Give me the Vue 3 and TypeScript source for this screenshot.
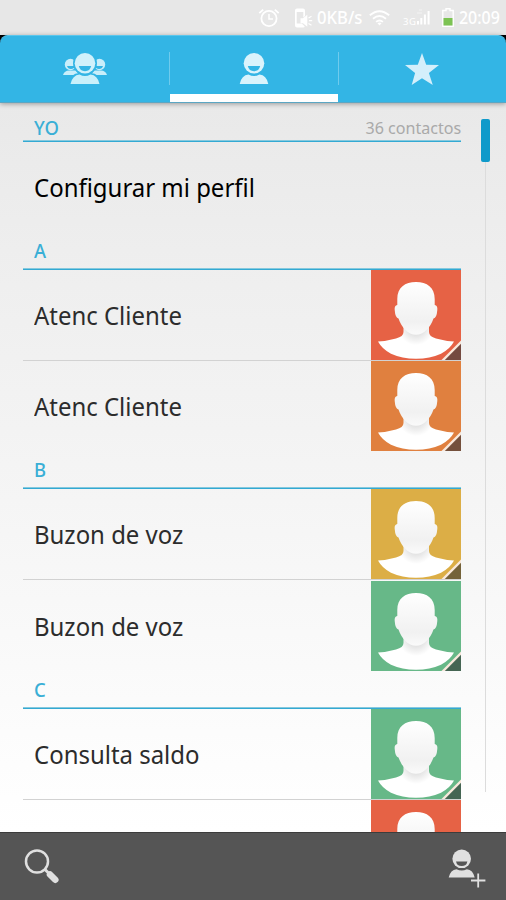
<script setup lang="ts">
interface Contact {
  id: number
  name: string
  color: string
  corner: string
}

interface Section {
  letter: string
  contacts: Contact[]
}

const sections: Section[] = [
  {
    letter: 'A',
    contacts: [
      { id: 1, name: 'Atenc Cliente', color: '#e66245', corner: '#744a40' },
      { id: 2, name: 'Atenc Cliente', color: '#e0803f', corner: '#74503c' },
    ],
  },
  {
    letter: 'B',
    contacts: [
      { id: 3, name: 'Buzon de voz', color: '#dcae46', corner: '#746239' },
      { id: 4, name: 'Buzon de voz', color: '#67b888', corner: '#456553' },
    ],
  },
  {
    letter: 'C',
    contacts: [
      { id: 5, name: 'Consulta saldo', color: '#67b888', corner: '#456553' },
      { id: 6, name: '', color: '#e66245', corner: '#744a40' },
    ],
  },
]
</script>

<template>
  <div class="screen">
    <header class="status">
      <svg class="st-alarm" width="22" height="20" viewBox="0 0 22 20" fill="none" stroke="#fff">
        <circle cx="11" cy="10.5" r="7.6" stroke-width="1.8" />
        <path d="M11 6v5h4" stroke-width="1.5" />
        <path d="M1.3 5.2 5.2 1.6M20.7 5.2 16.8 1.6" stroke-width="1.8" />
      </svg>
      <svg class="st-phone" width="19" height="20" viewBox="0 0 19 20" fill="#fff">
        <path fill-rule="evenodd" d="M3 .5h6q2 0 2 2V8L9.300 9.500V4H2.700v11.500h5l3 2.800q0 1.200-1.700 1.200H3q-2 0-2-2v-15q0-2 2-2Z" />
        <path d="M6.500 10.300h2.500L13.300 6.800v12L9 15.300H6.500Z" />
        <path d="M14.500 10l3-1.800M15 12.700h3.200M14.500 15.400l3 1.800" stroke="#fff" stroke-width="1.200" />
      </svg>
      <span class="st-text st-rate">0KB/s</span>
      <svg class="st-wifi" width="21" height="16" viewBox="0 0 21 16" fill="none" stroke="#fff" stroke-width="1.800">
        <path d="M.8 5.300Q10.500-2.800 20.200 5.300M4 8.700q6.500-5.400 13 0M7.100 11.900q3.400-2.800 6.800 0" />
        <path d="m8.500 13.200 2 2.300 2-2.300q-2-1.400-4 0Z" fill="#fff" stroke="none" />
      </svg>
      <svg class="st-signal" width="28" height="22" viewBox="0 0 28 22" fill="#fff">
        <text x="0" y="17.500" font-size="9.500" textLength="13">3G</text>
        <path d="M14 14h2v3.500h-2zM17.300 11h2v6.500h-2zM20.900 7.500h2v10h-2zM24.600 4h2v13.500h-2z" />
        <path d="M14 6h5M16 3h3" stroke="#fff" stroke-opacity=".5" />
      </svg>
      <svg class="st-battery" width="12" height="19" viewBox="0 0 12 19" fill="none">
        <path d="M4 2.500V.8h4v1.700h3.200v15.700H.8V2.500Z" stroke="#fff" stroke-width="1.400" />
        <path d="M1.500 10h9v7.500h-9z" fill="#7cc353" />
      </svg>
      <span class="st-text st-clock">20:09</span>
    </header>

    <div class="tabs-wrap">
      <nav class="tabs">
        <div class="tab">
          <svg width="44" height="32" viewBox="0 0 44 32">
            <g fill="#c9eefa">
              <circle cx="7.500" cy="11.500" r="5.700" />
              <circle cx="36.500" cy="11.500" r="5.700" />
              <path d="M0 22q1.500-4.500 6-4.500h7l3 4.500ZM44 22q-1.500-4.500-6-4.500h-7L28 22Z" />
            </g>
            <path d="M4 13h8q-.8 3-4 3t-4-3ZM40 13h-8q.8 3 4 3t4-3Z" fill="#33b5e5" />
            <circle cx="22" cy="10.300" r="12" fill="#33b5e5" />
            <path d="M5.500 31q2-11 11-10.900h11q9-.1 11 10.900Z" fill="#33b5e5" />
            <path d="M7.500 31q2-9 9-9.500 5.500 3 11 0 7 .5 9 9.500Z" fill="#c9f0fb" />
            <circle cx="22" cy="10.300" r="10.300" fill="#d0f1fb" />
            <path d="M15.800 13h12.400q-1.200 5.200-6.200 5.200T15.800 13Z" fill="#33b5e5" />
          </svg>
        </div>
        <div class="tab active">
          <svg width="30" height="32" viewBox="0 0 30 32">
            <path d="M.7 31q1.900-9 8.800-9.500 5.500 3 11 0 6.900.5 8.800 9.500Z" fill="#daf3fc" />
            <circle cx="15" cy="10.300" r="10.300" fill="#daf3fc" />
            <path d="M8.800 13h12.400Q20 18.200 15 18.200T8.800 13Z" fill="#33b5e5" />
          </svg>
        </div>
        <div class="tab">
          <svg width="34" height="33" viewBox="0 0 34 33">
            <path d="M17 0 21.200 11.800 34 12.100 23.900 20 27.800 32 17 25.200 6.700 32 10.100 20 0 12.100 12.800 11.800Z" fill="#d4effb" />
          </svg>
        </div>
      </nav>
    </div>

    <main class="content">
      <div class="list">
        <div class="head me-head">
          <span class="letter">YO</span>
          <span class="count">36 contactos</span>
        </div>
        <div class="me"><span class="name">Configurar mi perfil</span></div>
        <section v-for="s in sections" :key="s.letter">
          <div class="head"><span class="letter">{{ s.letter }}</span></div>
          <div v-for="c in s.contacts" :key="c.id" class="row">
            <span class="name">{{ c.name }}</span>
            <svg class="avatar" width="90" height="90" viewBox="0 0 90 90">
              <defs>
                <linearGradient :id="'face' + c.id" x1="0" y1="0" x2="0" y2="1">
                  <stop offset="0" stop-color="#fff" />
                  <stop offset=".25" stop-color="#fafafa" />
                  <stop offset=".75" stop-color="#f1f1f1" />
                  <stop offset="1" stop-color="#fafafa" />
                </linearGradient>
                <radialGradient :id="'neck' + c.id" gradientUnits="userSpaceOnUse" cx="45" cy="57" r="18">
                  <stop offset=".3" stop-color="#dcdcdc" />
                  <stop offset="1" stop-color="#fff" />
                </radialGradient>
              </defs>
              <rect width="90" height="90" :fill="c.color" />
              <path
                :fill="'url(#neck' + c.id + ')'"
                d="M32.500 54V62Q32.500 66.500 25 68.500 16 71 7 71.500 11 79 20 83.700 31 88.700 45 88.700T70 83.700Q79 79 83 71.500 74 71 65 68.500 58 66.500 58 62V54Z"
              />
              <path
                :fill="'url(#face' + c.id + ')'"
                d="M45 12C34 12 26.300 17.500 26.300 29V35Q23.200 35.500 23.700 40 24.300 48 27.500 48.500C30.500 57 37 64.800 45 64.800S59.500 57 62.500 48.500Q65.700 48 66.300 40 66.800 35.500 63.700 35V29C63.700 17.500 56 12 45 12Z"
              />
              <path d="M70.500 90 90 70.500V90Z" fill="#f9e9dc" />
              <path d="M73.800 90 90 73.800V90Z" :fill="c.corner" />
            </svg>
          </div>
        </section>
      </div>
      <div class="scroller"><div class="thumb"></div></div>
    </main>

    <footer class="bar">
      <svg width="36" height="36" viewBox="0 0 36 36">
        <circle cx="13" cy="12.500" r="11" fill="none" stroke="#e0e0e0" stroke-width="2.500" />
        <path d="m20.500 20 4 4" stroke="#e0e0e0" stroke-width="3" />
        <path d="m26 25.500 5.300 5.300" stroke="#e0e0e0" stroke-width="6.500" stroke-linecap="round" />
      </svg>
      <svg width="38" height="40" viewBox="0 0 38 40">
        <path d="M.7 28.500Q2.500 20.700 8.500 20.200q5.200 2.800 10.400 0 6 .5 7.800 8.300Z" fill="#e0e0e0" />
        <circle cx="13.700" cy="9.800" r="9.300" fill="#e0e0e0" />
        <path d="M8 12.500h11.400q-1 4.600-5.700 4.600T8 12.500Z" fill="#555" />
        <path d="M30.200 24.500v14M23 31.500h14.400" stroke="#e0e0e0" stroke-width="1.800" />
      </svg>
    </footer>
  </div>
</template>

<style>
body {
  margin: 0;
}
</style>

<style scoped>
.screen {
  width: 506px;
  height: 900px;
  display: flex;
  flex-direction: column;
  overflow: hidden;
  font-family: 'Noto Sans', 'Open Sans', sans-serif;
  background: linear-gradient(#e6e6e6 0, #e9e9e9 105px, #eeeeee 250px, #f5f5f5 500px, #fff 832px);
}

.status {
  height: 35px;
  box-sizing: border-box;
  padding-left: 258px;
  display: flex;
  align-items: center;
  flex: none;
  background: #e7e7e7;
}

.status svg {
  flex: none;
}

.st-phone {
  margin-left: 14px;
}

.st-text {
  color: #fff;
  font-size: 17.5px;
  font-weight: 500;
  line-height: 35px;
  white-space: nowrap;
  transform-origin: left;
  transform: scaleX(0.95);
}

.st-rate {
  width: 47px;
  margin-left: 4px;
}

.st-wifi {
  margin-left: 5px;
}

.st-signal {
  margin-left: 13px;
}

.st-battery {
  margin-left: 11px;
}

.st-clock {
  margin-left: 5px;
  transform: scaleX(0.91);
}

.tabs-wrap {
  height: 67px;
  flex: none;
  background: #000;
}

.tabs {
  height: 68px;
  box-sizing: border-box;
  display: grid;
  grid-template-columns: 170px 168px 168px;
  position: relative;
  background: #33b5e5;
  border-top: 1px solid #5bc6ec;
  border-bottom: 1px solid #5ba6c3;
  border-radius: 8px 8px 0 0;
  box-shadow: 0 1px 5px rgba(0, 0, 0, 0.35);
}

.tab {
  display: flex;
  justify-content: center;
  align-items: flex-start;
  padding-top: 17px;
  background: linear-gradient(#6fcbed, #6fcbed) no-repeat right 16px / 1px 33px;
}

.tab.active {
  background: none;
  border-bottom: 8px solid #fff;
}

.tab:last-child {
  padding-right: 0;
  background-position: left 16px;
}

.content {
  flex: 1;
  min-height: 0;
  display: flex;
  overflow: hidden;
}

.list {
  width: 438.5px;
  margin-left: 22.5px;
  flex: none;
}

.head {
  height: 37.9px;
  box-sizing: border-box;
  display: flex;
  justify-content: space-between;
  align-items: flex-end;
  padding: 0 0 2px 11.5px;
  background: linear-gradient(#86c9dd 0 1px, #33a9d3 1px 2px) no-repeat 0 100% / 100% 2px;
}

.letter {
  font-size: 20px;
  line-height: 34px;
  font-weight: 500;
  color: #3aafd6;
  transform-origin: left;
  transform: scaleX(0.92);
}

.me-head {
  height: 40px;
}

.me-head .letter {
  line-height: 24px;
}

.count {
  font-size: 17px;
  line-height: 25px;
  color: #a9a9a9;
  transform-origin: right;
  transform: scaleX(0.945);
}

.me {
  height: 89.8px;
  padding-left: 11.5px;
  display: flex;
  align-items: center;
}

.name {
  font-size: 25px;
  color: #2c2c2c;
  white-space: nowrap;
  transform-origin: left;
  transform: scaleX(0.958);
}

.me .name {
  color: #000;
}

.row {
  height: 90px;
  padding-left: 11.5px;
  display: flex;
  justify-content: space-between;
  align-items: center;
}

.row:not(:last-child) {
  border-bottom: 1px solid #d2d2d2;
  margin-bottom: 0.6px;
}

.avatar {
  flex: none;
}

.scroller {
  width: 9px;
  height: 673px;
  margin: 17px 0 0 19.5px;
  background: linear-gradient(#dcdcdc, #dcdcdc) no-repeat 4px 0 / 1px 100%;
}

.thumb {
  height: 43px;
  border-radius: 2px;
  background: #0f9aca;
}

.bar {
  height: 68px;
  box-sizing: border-box;
  flex: none;
  display: flex;
  justify-content: space-between;
  align-items: flex-start;
  padding: 16px 20px 0 24px;
  background: #555;
  border-top: 1px solid #3c3c3c;
}
</style>
